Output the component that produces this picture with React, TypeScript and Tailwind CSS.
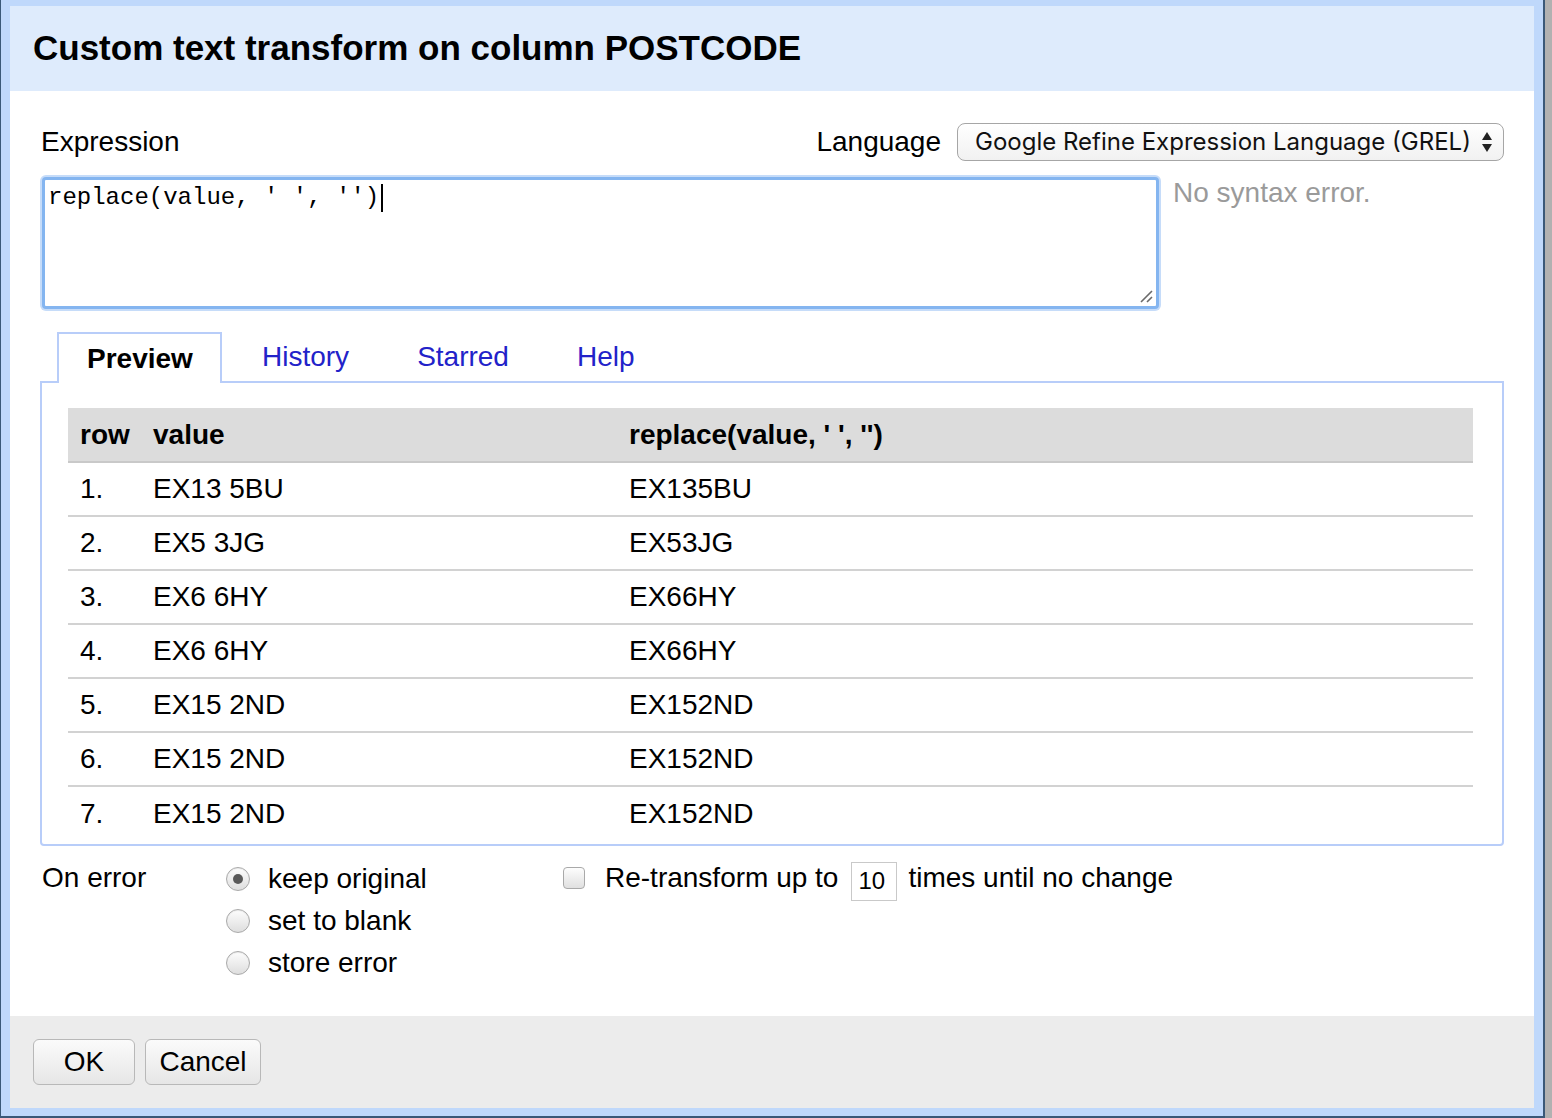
import React from "react";

const rows = [
  ["1.", "EX13 5BU", "EX135BU"],
  ["2.", "EX5 3JG", "EX53JG"],
  ["3.", "EX6 6HY", "EX66HY"],
  ["4.", "EX6 6HY", "EX66HY"],
  ["5.", "EX15 2ND", "EX152ND"],
  ["6.", "EX15 2ND", "EX152ND"],
  ["7.", "EX15 2ND", "EX152ND"],
];

function Radio({ checked }: { checked?: boolean }) {
  return (
    <span className="w-[24px] h-[24px] rounded-full border border-[#a9a9a9] bg-gradient-to-b from-[#fdfdfd] to-[#dedede] flex items-center justify-center shadow-[inset_0_1px_1px_rgba(0,0,0,0.08)]">
      {checked && <span className="w-[10px] h-[10px] rounded-full bg-[#595959]" />}
    </span>
  );
}

export default function App() {
  const sans = { fontFamily: '"Liberation Sans", Arial, sans-serif' };
  return (
    <div className="w-[1552px] h-[1118px] bg-[#b1b1b1] overflow-hidden" style={sans}>
      <div className="w-[1545px] h-[1118px] border-l border-r-2 border-b-2 border-[#3a5878] bg-[#bfd8fb] pl-[9px] pr-[9px] pt-[6px] pb-[8px] flex flex-col">
        {/* header */}
        <div className="h-[85px] bg-[#deebfc] flex items-center pl-[23px] pb-[2px]">
          <h1 className="text-[35px] font-bold text-black leading-none">Custom text transform on column POSTCODE</h1>
        </div>
        {/* body */}
        <div className="flex-1 bg-white px-[30px] pt-[32px] flex flex-col">
          <div className="flex items-center justify-between h-[38px]">
            <span className="text-[28px] text-black ml-[1px] -mt-[1px]">Expression</span>
            <div className="flex items-center">
              <span className="text-[28px] text-black mr-[16px] -mt-[1px]">Language</span>
              <div className="w-[547px] h-[38px] rounded-[8px] border border-[#a6a6a6] bg-gradient-to-b from-[#ffffff] to-[#f1f1f1] flex items-center pl-[17px] pr-[10px] justify-between" style={{ fontFamily: 'Inter, "Open Sans", sans-serif' }}>
                <span className="text-[24px] text-[#111]">Google Refine Expression Language (GREL)</span>
                <svg width="12" height="22" viewBox="0 0 12 22">
                  <path d="M6 1 L11 9 L1 9 Z" fill="#222" />
                  <path d="M6 21 L11 13 L1 13 Z" fill="#222" />
                </svg>
              </div>
            </div>
          </div>
          <div className="flex mt-[16px] items-start">
            <div className="relative ml-[2px] w-[1117px] h-[132px] rounded-[4px] border-[3px] border-[#84b5f0] ring-2 ring-[#c6dcf9] bg-white pl-[3px] pt-[4px]">
              <span className="text-[24px] leading-[28px] text-black" style={{ fontFamily: '"Liberation Mono", "Courier New", monospace' }}>
                replace(value, ' ', '')
              </span>
              <span className="inline-block w-[2px] h-[28px] bg-black align-top ml-[2px]" />
              <svg className="absolute right-[2px] bottom-[2px]" width="16" height="16" viewBox="0 0 16 16">
                <path d="M3 14 L14 3 M9 14 L14 9" stroke="#6a6a6a" strokeWidth="1.6" />
              </svg>
            </div>
            <span className="ml-[14px] text-[28px] text-[#9a9a9a] leading-[32px]">No syntax error.</span>
          </div>
          {/* tabs */}
          <div className="flex mt-[23px] h-[49px] items-stretch">
            <div className="ml-[17px] mr-[6px] w-[165px] border-2 border-b-0 border-[#b8cdf9] bg-white relative z-10 -mb-[2px] flex items-center pl-[28px]">
              <span className="text-[28px] font-bold text-black">Preview</span>
            </div>
            <div className="px-[34px] flex items-center text-[28px] text-[#2222c9]">History</div>
            <div className="px-[34px] flex items-center text-[28px] text-[#2222c9]">Starred</div>
            <div className="px-[34px] flex items-center text-[28px] text-[#2222c9]">Help</div>
          </div>
          <div className="h-[465px] border-2 border-[#b8cdf9] rounded-b-[4px] pl-[26px] pr-[29px] pt-[25px]">
            <table className="w-full border-collapse text-[28px] text-black">
              <thead>
                <tr className="bg-[#dcdcdc] border-b-2 border-[#c9c9c9] h-[54px]">
                  <th className="w-[73px] text-left font-bold pl-[12px]">row</th>
                  <th className="w-[476px] text-left font-bold pl-[12px]">value</th>
                  <th className="text-left font-bold pl-[12px]">replace(value, ' ', '')</th>
                </tr>
              </thead>
              <tbody>
                {rows.map((r, i) => (
                  <tr key={i} className={i < rows.length - 1 ? "h-[54px] border-b-2 border-[#d2d2d2]" : "h-[54px]"}>
                    <td className="pl-[12px]">{r[0]}</td>
                    <td className="pl-[12px]">{r[1]}</td>
                    <td className="pl-[12px]">{r[2]}</td>
                  </tr>
                ))}
              </tbody>
            </table>
          </div>
          {/* on error */}
          <div className="flex mt-[12px] text-[28px] text-black">
            <span className="w-[184px] ml-[2px] leading-[40px]">On error</span>
            <div className="flex flex-col w-[337px]">
              {[["keep original", true], ["set to blank", false], ["store error", false]].map(([l, c], i) => (
                <div key={i} className="flex items-center h-[42px]">
                  <Radio checked={c as boolean} />
                  <span className="ml-[18px]">{l as string}</span>
                </div>
              ))}
            </div>
            <div className="flex items-start h-[42px]">
              <div className="flex items-center h-[40px]">
                <span className="w-[22px] h-[22px] rounded-[4px] border border-[#a9a9a9] bg-gradient-to-b from-[#fdfdfd] to-[#e0e0e0]" />
                <span className="ml-[20px]">Re-transform up to</span>
                <span className="ml-[13px] w-[46px] h-[39px] border border-[#c9c9c9] flex items-center pl-[6px] text-[24px] mt-[6px]">10</span>
                <span className="ml-[11px]">times until no change</span>
              </div>
            </div>
          </div>
        </div>
        {/* footer */}
        <div className="h-[92px] bg-[#ececec] pl-[23px] pt-[23px] flex items-start gap-[10px]">
          <button className="w-[102px] h-[46px] rounded-[6px] border border-[#b8b8b8] bg-gradient-to-b from-[#fbfbfb] to-[#e6e6e6] text-[28px] text-black">OK</button>
          <button className="w-[116px] h-[46px] rounded-[6px] border border-[#b8b8b8] bg-gradient-to-b from-[#fbfbfb] to-[#e6e6e6] text-[28px] text-black">Cancel</button>
        </div>
      </div>
    </div>
  );
}
